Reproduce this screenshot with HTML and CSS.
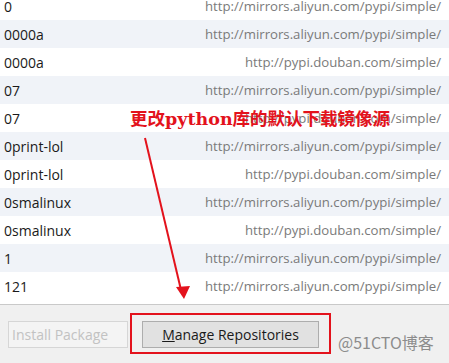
FILE: index.html
```html
<!DOCTYPE html>
<html lang="en">
<head>
  <meta charset="UTF-8">
  <title>Available Packages</title>
  <link rel="stylesheet" href="styles.css">
</head>
<body>
  <div class="package-list">
    <div class="row"><span class="name">0</span><span class="repo">http://mirrors.aliyun.com/pypi/simple/</span></div>
    <div class="row"><span class="name">0000a</span><span class="repo">http://mirrors.aliyun.com/pypi/simple/</span></div>
    <div class="row"><span class="name">0000a</span><span class="repo">http://pypi.douban.com/simple/</span></div>
    <div class="row"><span class="name">07</span><span class="repo">http://mirrors.aliyun.com/pypi/simple/</span></div>
    <div class="row"><span class="name">07</span><span class="repo">http://pypi.douban.com/simple/</span></div>
    <div class="row"><span class="name">0print-lol</span><span class="repo">http://mirrors.aliyun.com/pypi/simple/</span></div>
    <div class="row"><span class="name">0print-lol</span><span class="repo">http://pypi.douban.com/simple/</span></div>
    <div class="row"><span class="name">0smalinux</span><span class="repo">http://mirrors.aliyun.com/pypi/simple/</span></div>
    <div class="row"><span class="name">0smalinux</span><span class="repo">http://pypi.douban.com/simple/</span></div>
    <div class="row"><span class="name">1</span><span class="repo">http://mirrors.aliyun.com/pypi/simple/</span></div>
    <div class="row"><span class="name">121</span><span class="repo">http://mirrors.aliyun.com/pypi/simple/</span></div>
  </div>

  <div class="button-bar">
    <button class="btn btn-install" disabled>Install Package</button>
    <button class="btn btn-manage"><u>M</u>anage Repositories</button>
  </div>

  <!-- annotation on top of the screenshot -->
  <div class="note">更改<span class="latin">python</span>库的默认下载镜像源</div>
  <svg class="arrow" width="449" height="363" viewBox="0 0 449 363">
    <line x1="145" y1="138" x2="181" y2="290" stroke="#e3121c" stroke-width="2"/>
    <polygon points="176,287 190,286 184,299" fill="#e3121c"/>
  </svg>
  <div class="highlight"></div>
  <div class="watermark">@51CTO博客</div>
</body>
</html>
```

FILE: styles.css
```css
body {
  margin: 0;
  width: 449px;
  height: 363px;
  overflow: hidden;
  position: relative;
  background-color: #f0f0f0;
  font-family: "Open Sans", "Noto Sans", sans-serif;
  font-size: 14px;
}
.package-list {
  margin-top: -8px;
  height: 312px;
  overflow: hidden;
  background-color: #ffffff;
}
.row {
  display: flex;
  justify-content: space-between;
  align-items: center;
  height: 28px;
  padding: 0 8px 0 4px;
}
.row:nth-child(even) {
  background-color: #f0f3f8;
}
.name {
  color: #1a1a1a;
}
.repo {
  color: #7a7a7a;
  font-size: 13.2px;
}
.button-bar {
  display: flex;
  gap: 14px;
  padding: 16px 8px 0;
  border-top: 1px solid #c9c9c9;
  height: 57px;
  box-sizing: border-box;
}
.btn {
  height: 27px;
  width: 120px;
  padding: 0;
  font-family: "Open Sans", "Noto Sans", sans-serif;
  font-size: 14px;
  color: #c2c2c2;
  background-color: #f4f4f4;
  border: 1px solid #d6d6d6;
}
.btn-install {
  text-align: left;
  padding-left: 3px;
}
.btn-manage {
  width: 177px;
  color: #1a1a1a;
  background-color: #e1e1e1;
  border-color: #adadad;
}
.note {
  position: absolute;
  left: 130px;
  top: 106px;
  color: #e3121c;
  font-family: "Noto Sans CJK SC", sans-serif;
  font-weight: bold;
  font-size: 17.5px;
  line-height: 24px;
}
.note .latin {
  font-family: "DejaVu Serif", serif;
}
.arrow {
  position: absolute;
  left: 0;
  top: 0;
}
.highlight {
  position: absolute;
  left: 130px;
  top: 313px;
  width: 197px;
  height: 37px;
  border: 2px solid #e3121c;
}
.watermark {
  position: absolute;
  left: 338px;
  top: 330px;
  color: #8c8c8c;
  font-size: 16px;
  font-family: "Noto Sans CJK SC", sans-serif;
}
```
